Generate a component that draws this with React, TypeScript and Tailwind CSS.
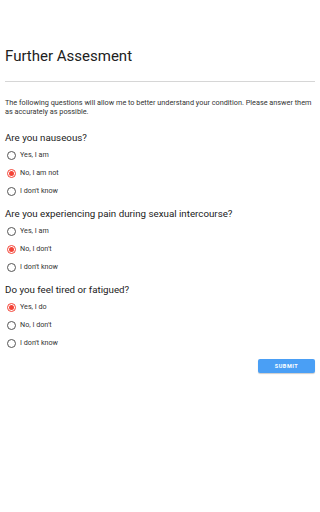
import { useState } from "react";

type Question = {
    id: string;
    label: string;
    options: string[];
    initial: number;
};

const QUESTIONS: Question[] = [
    {
        id: "nausea",
        label: "Are you nauseous?",
        options: ["Yes, I am", "No, I am not", "I don't know"],
        initial: 1,
    },
    {
        id: "pain",
        label: "Are you experiencing pain during sexual intercourse?",
        options: ["Yes, I am", "No, I don't", "I don't know"],
        initial: 1,
    },
    {
        id: "tired",
        label: "Do you feel tired or fatigued?",
        options: ["Yes, I do", "No, I don't", "I don't know"],
        initial: 0,
    },
];

function Radio({ checked }: { checked: boolean }) {
    return (
        <span
            className={
                checked
                    ? "flex h-[9px] w-[9px] items-center justify-center rounded-full border border-[#f44336]"
                    : "flex h-[9px] w-[9px] items-center justify-center rounded-full border border-[#555]"
            }
        >
            {checked && <span className="h-[5px] w-[5px] rounded-full bg-[#f44336]" />}
        </span>
    );
}

export default function App() {
    const [answers, setAnswers] = useState<Record<string, number>>(() =>
        Object.fromEntries(QUESTIONS.map((q) => [q.id, q.initial])),
    );

    return (
        <div className="min-h-[512px] bg-white px-[5px] font-['Roboto',sans-serif] text-[#212121]">
            {/* Header */}
            <h1 className="pt-[46px] text-[15px] leading-[20px] font-normal">
                Further Assesment
            </h1>
            <div className="mt-[15px] h-px bg-[#d6d6d6]" />

            <p className="mt-[16px] text-[7.3px] leading-[9px] text-[#333]">
                The following questions will allow me to better understand your
                condition. Please answer them as accurately as possible.
            </p>

            {/* Questions */}
            {QUESTIONS.map((q, qi) => (
                <div key={q.id} className={qi === 0 ? "mt-[15px]" : "mt-[7px]"}>
                    <div className="text-[9.75px] leading-[14px]">{q.label}</div>
                    <div className="mt-[1px]">
                        {q.options.map((opt, oi) => (
                            <label
                                key={opt}
                                className="flex h-[18px] cursor-pointer items-center gap-[4px] pl-[2px]"
                                onClick={() => setAnswers((a) => ({ ...a, [q.id]: oi }))}
                            >
                                <Radio checked={answers[q.id] === oi} />
                                <span className="text-[7.2px] text-[#333]">{opt}</span>
                            </label>
                        ))}
                    </div>
                </div>
            ))}

            <div className="mt-[7px] flex justify-end">
                <button className="h-[14px] w-[57px] rounded-[2px] bg-[#4a9ff5] text-[5.5px] font-bold tracking-[0.5px] text-white shadow-[0_1px_1px_rgba(0,0,0,0.2)]">
                    SUBMIT
                </button>
            </div>
        </div>
    );
}
